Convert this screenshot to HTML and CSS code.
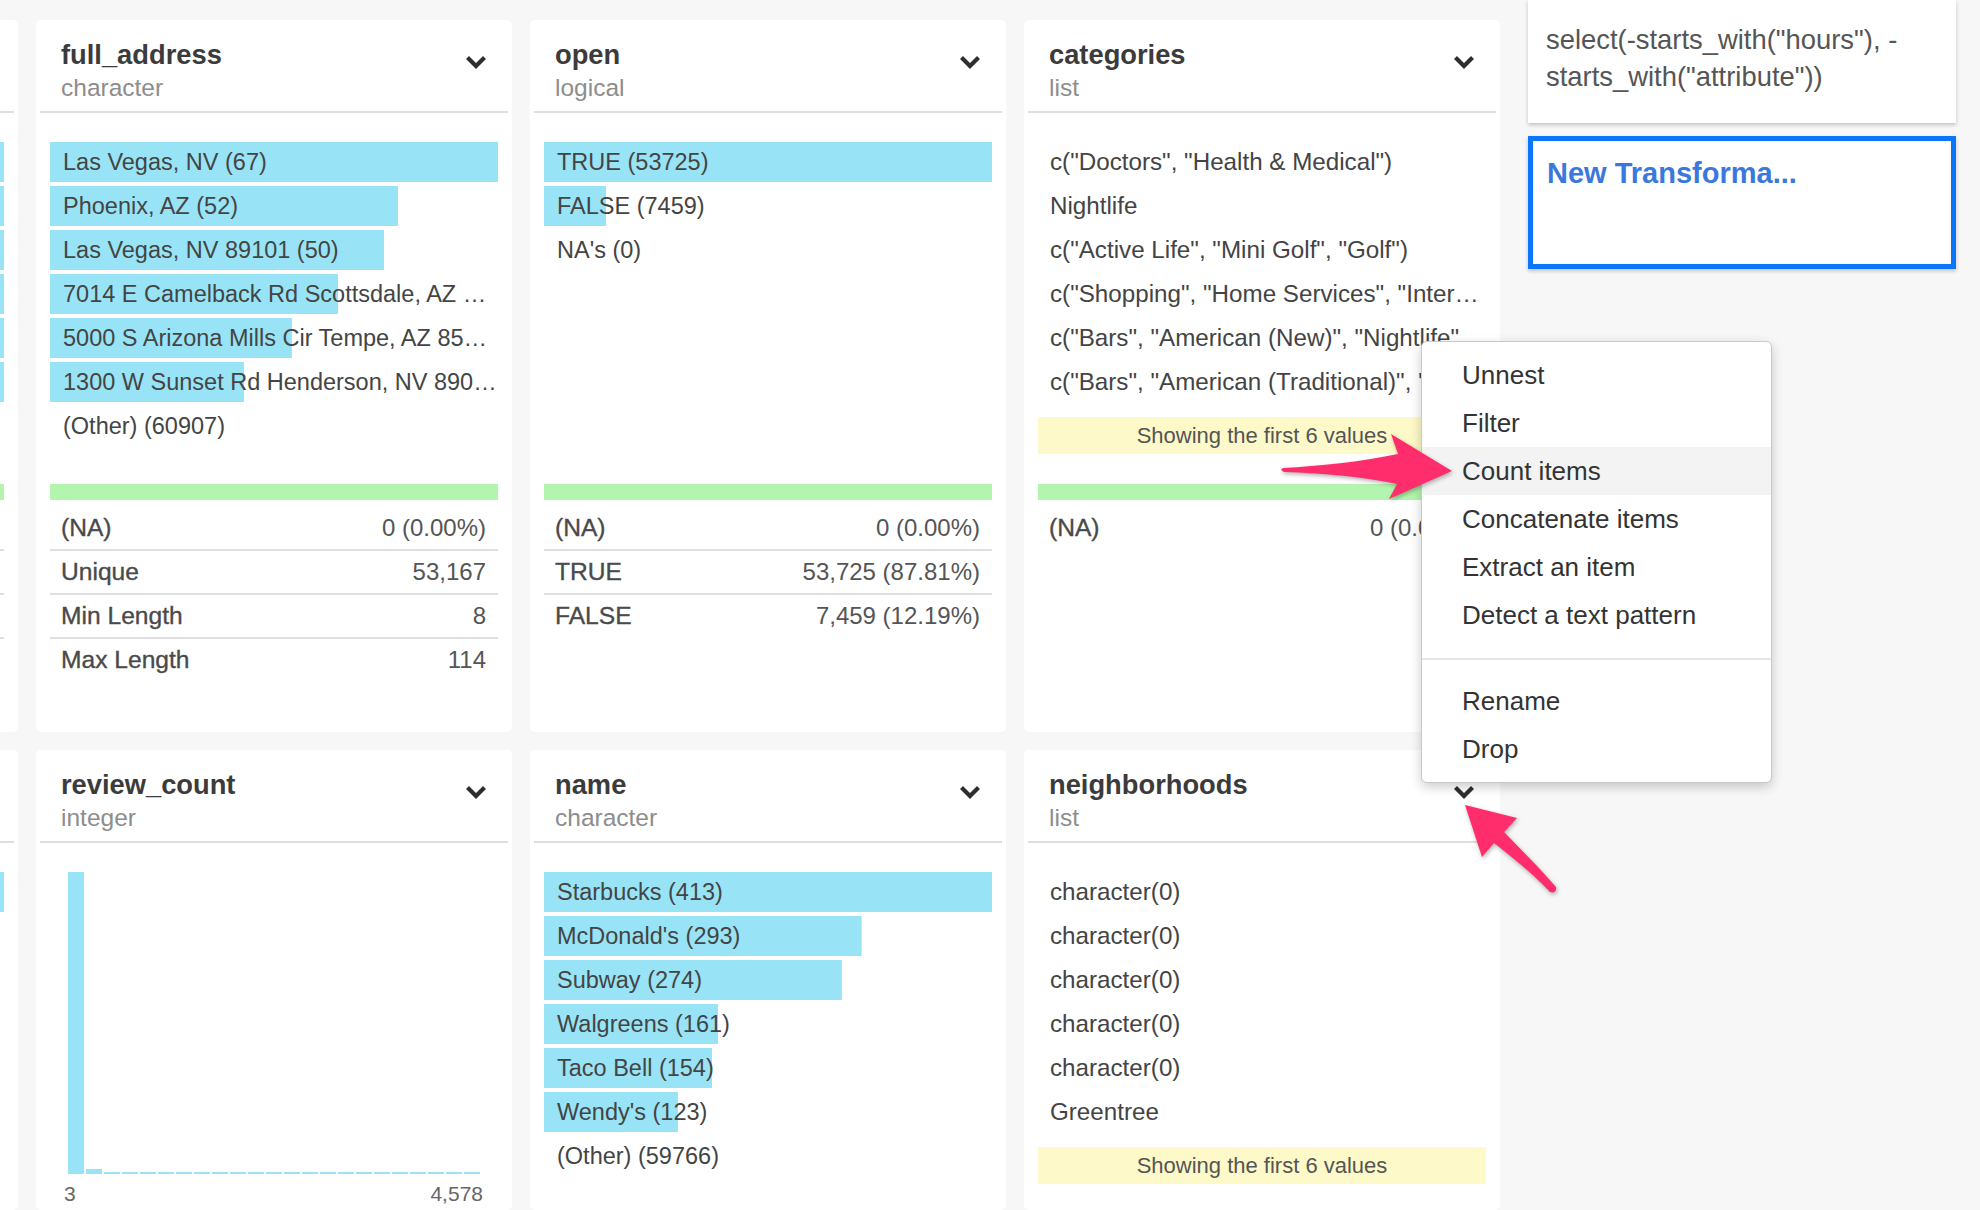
FILE: index.html
```html
<!DOCTYPE html>
<html lang="en">
<head>
<meta charset="utf-8">
<title>Columns summary</title>
<link rel="stylesheet" href="styles.css">
</head>
<body>
<div class="page">
  <div class="board">
    <!-- row 1: first column is scrolled out of view, only its right edge shows -->
    <section class="card card-clipped">
      <header class="card-head"></header>
      <div class="card-body">
        <div class="values">
          <div class="row bar" style="--w:100%"></div>
          <div class="row bar" style="--w:100%"></div>
          <div class="row bar" style="--w:100%"></div>
          <div class="row bar" style="--w:100%"></div>
          <div class="row bar" style="--w:100%"></div>
          <div class="row bar" style="--w:100%"></div>
        </div>
        <div class="valid"></div>
        <div class="stats">
          <div class="stat"></div>
          <div class="stat"></div>
          <div class="stat"></div>
          <div class="stat"></div>
        </div>
      </div>
    </section>

    <section class="card">
      <header class="card-head">
        <div class="col-name"><h2 class="col-title">full_address</h2><div class="col-type">character</div></div>
        <svg class="chev" viewBox="0 0 22 14"><path d="M2.5 2.5L11 11L19.5 2.5"/></svg>
      </header>
      <div class="card-body">
        <div class="values">
          <div class="row bar" style="--w:100%">Las Vegas, NV (67)</div>
          <div class="row bar" style="--w:77.7%">Phoenix, AZ (52)</div>
          <div class="row bar" style="--w:74.6%">Las Vegas, NV 89101 (50)</div>
          <div class="row bar" style="--w:64.3%">7014 E Camelback Rd Scottsdale, AZ …</div>
          <div class="row bar" style="--w:54%">5000 S Arizona Mills Cir Tempe, AZ 85…</div>
          <div class="row bar" style="--w:43.3%">1300 W Sunset Rd Henderson, NV 890…</div>
          <div class="row">(Other) (60907)</div>
        </div>
        <div class="valid"></div>
        <div class="stats">
          <div class="stat"><span class="lbl">(NA)</span><span>0 (0.00%)</span></div>
          <div class="stat"><span class="lbl">Unique</span><span>53,167</span></div>
          <div class="stat"><span class="lbl">Min Length</span><span>8</span></div>
          <div class="stat"><span class="lbl">Max Length</span><span>114</span></div>
        </div>
      </div>
    </section>

    <section class="card">
      <header class="card-head">
        <div class="col-name"><h2 class="col-title">open</h2><div class="col-type">logical</div></div>
        <svg class="chev" viewBox="0 0 22 14"><path d="M2.5 2.5L11 11L19.5 2.5"/></svg>
      </header>
      <div class="card-body">
        <div class="values">
          <div class="row bar" style="--w:100%">TRUE (53725)</div>
          <div class="row bar" style="--w:13.9%">FALSE (7459)</div>
          <div class="row">NA's (0)</div>
        </div>
        <div class="valid"></div>
        <div class="stats">
          <div class="stat"><span class="lbl">(NA)</span><span>0 (0.00%)</span></div>
          <div class="stat"><span class="lbl">TRUE</span><span>53,725 (87.81%)</span></div>
          <div class="stat"><span class="lbl">FALSE</span><span>7,459 (12.19%)</span></div>
        </div>
      </div>
    </section>

    <section class="card">
      <header class="card-head">
        <div class="col-name"><h2 class="col-title">categories</h2><div class="col-type">list</div></div>
        <svg class="chev" viewBox="0 0 22 14"><path d="M2.5 2.5L11 11L19.5 2.5"/></svg>
      </header>
      <div class="card-body">
        <div class="values">
          <div class="row plain">c("Doctors", "Health &amp; Medical")</div>
          <div class="row plain">Nightlife</div>
          <div class="row plain">c("Active Life", "Mini Golf", "Golf")</div>
          <div class="row plain">c("Shopping", "Home Services", "Inter…</div>
          <div class="row plain">c("Bars", "American (New)", "Nightlife"…</div>
          <div class="row plain">c("Bars", "American (Traditional)", "…</div>
          <div class="note">Showing the first 6 values</div>
        </div>
        <div class="valid"></div>
        <div class="stats">
          <div class="stat"><span class="lbl">(NA)</span><span>0 (0.00%)</span></div>
        </div>
      </div>
    </section>

    <!-- row 2 -->
    <section class="card card-clipped">
      <header class="card-head"></header>
      <div class="card-body">
        <div class="values">
          <div class="row bar" style="--w:100%"></div>
          <div class="row bar" style="--w:62%"></div>
          <div class="row bar" style="--w:41%"></div>
          <div class="row bar" style="--w:33%"></div>
          <div class="row bar" style="--w:27%"></div>
          <div class="row bar" style="--w:20%"></div>
        </div>
      </div>
    </section>

    <section class="card">
      <header class="card-head">
        <div class="col-name"><h2 class="col-title">review_count</h2><div class="col-type">integer</div></div>
        <svg class="chev" viewBox="0 0 22 14"><path d="M2.5 2.5L11 11L19.5 2.5"/></svg>
      </header>
      <div class="card-body">
        <div class="histo">
          <div class="hbar" style="height:302px"></div>
          <div class="hbar" style="height:5px"></div>
          <div class="hbar" style="height:2px"></div>
          <div class="hbar" style="height:2px"></div>
          <div class="hbar" style="height:2px"></div>
          <div class="hbar" style="height:2px"></div>
          <div class="hbar" style="height:2px"></div>
          <div class="hbar" style="height:2px"></div>
          <div class="hbar" style="height:2px"></div>
          <div class="hbar" style="height:2px"></div>
          <div class="hbar" style="height:2px"></div>
          <div class="hbar" style="height:2px"></div>
          <div class="hbar" style="height:2px"></div>
          <div class="hbar" style="height:2px"></div>
          <div class="hbar" style="height:2px"></div>
          <div class="hbar" style="height:2px"></div>
          <div class="hbar" style="height:2px"></div>
          <div class="hbar" style="height:2px"></div>
          <div class="hbar" style="height:2px"></div>
          <div class="hbar" style="height:2px"></div>
          <div class="hbar" style="height:2px"></div>
          <div class="hbar" style="height:2px"></div>
          <div class="hbar" style="height:2px"></div>
        </div>
        <div class="axis"><span>3</span><span>4,578</span></div>
      </div>
    </section>

    <section class="card">
      <header class="card-head">
        <div class="col-name"><h2 class="col-title">name</h2><div class="col-type">character</div></div>
        <svg class="chev" viewBox="0 0 22 14"><path d="M2.5 2.5L11 11L19.5 2.5"/></svg>
      </header>
      <div class="card-body">
        <div class="values">
          <div class="row bar" style="--w:100%">Starbucks (413)</div>
          <div class="row bar" style="--w:70.9%">McDonald's (293)</div>
          <div class="row bar" style="--w:66.5%">Subway (274)</div>
          <div class="row bar" style="--w:38.9%">Walgreens (161)</div>
          <div class="row bar" style="--w:37.5%">Taco Bell (154)</div>
          <div class="row bar" style="--w:29.9%">Wendy's (123)</div>
          <div class="row">(Other) (59766)</div>
        </div>
      </div>
    </section>

    <section class="card">
      <header class="card-head">
        <div class="col-name"><h2 class="col-title">neighborhoods</h2><div class="col-type">list</div></div>
        <svg class="chev" viewBox="0 0 22 14"><path d="M2.5 2.5L11 11L19.5 2.5"/></svg>
      </header>
      <div class="card-body">
        <div class="values">
          <div class="row plain">character(0)</div>
          <div class="row plain">character(0)</div>
          <div class="row plain">character(0)</div>
          <div class="row plain">character(0)</div>
          <div class="row plain">character(0)</div>
          <div class="row plain">Greentree</div>
          <div class="note">Showing the first 6 values</div>
        </div>
      </div>
    </section>
  </div>

  <aside class="steps">
    <div class="step step-code">select(-starts_with("hours"), -<br>starts_with("attribute"))</div>
    <div class="step step-new">New Transforma...</div>
  </aside>
</div>

<div class="menu">
  <div class="menu-item">Unnest</div>
  <div class="menu-item">Filter</div>
  <div class="menu-item active">Count items</div>
  <div class="menu-item">Concatenate items</div>
  <div class="menu-item">Extract an item</div>
  <div class="menu-item">Detect a text pattern</div>
  <div class="menu-sep"></div>
  <div class="menu-item">Rename</div>
  <div class="menu-item">Drop</div>
</div>

<svg class="overlay" viewBox="0 0 1980 1210" width="1980" height="1210">
  <path class="arrow" d="M1283 468 C1320 466 1360 462 1398 454 L1391 434 L1452 471 L1389 499 L1397 484 C1360 476 1320 473 1284 472 Q1279 470 1283 468 Z"/>
  <path class="arrow" d="M1465 805 L1517 818 L1504 832 C1522 851 1540 868 1556 887 Q1557 894 1550 892 C1533 874 1512 857 1494 843 L1482 857 Z"/>
</svg>
</body>
</html>
```

FILE: styles.css
```css
html, body {
  margin: 0;
  padding: 0;
}

body {
  width: 1980px;
  height: 1210px;
  overflow: hidden;
  position: relative;
  background: #f7f7f7;
  font-family: "Liberation Sans", Arial, Helvetica, sans-serif;
  color: #444;
}

.page {
  display: flex;
  align-items: flex-start;
  height: 1210px;
  overflow: hidden;
}

.board {
  flex: none;
  display: grid;
  grid-template-columns: repeat(4, 476px);
  grid-template-rows: 712px 460px;
  column-gap: 18px;
  row-gap: 18px;
  margin-left: -458px;
  padding-top: 20px;
}

.card {
  background: #fff;
  border-radius: 5px;
  padding: 0 4px;
  box-sizing: border-box;
  overflow: hidden;
}

.card-head {
  height: 93px;
  box-sizing: border-box;
  border-bottom: 2px solid #dedede;
  padding: 20px 21px 0;
  display: flex;
  justify-content: space-between;
  align-items: flex-start;
}

.col-title {
  margin: 0;
  font-size: 27.3px;
  line-height: 30px;
  font-weight: 700;
  color: #3b3b3b;
}

.col-type {
  margin-top: 1px;
  font-size: 24.5px;
  line-height: 34px;
  color: #8d8d8d;
}

.chev {
  flex: none;
  width: 22px;
  height: 14px;
  margin-top: 15px;
  fill: none;
  stroke: #2e2e2e;
  stroke-width: 4.2;
}

.card-body {
  padding: 29px 10px 0;
}

.values {
  height: 342px;
  display: flex;
  flex-direction: column;
  gap: 4px;
}

.row {
  flex: none;
  height: 40px;
  line-height: 40px;
  padding-left: 13px;
  font-size: 23.5px;
  white-space: nowrap;
  color: #444;
}

.row.plain {
  padding-left: 12px;
  font-size: 24.2px;
}

.bar {
  background-image: linear-gradient(#98e4f6, #98e4f6);
  background-repeat: no-repeat;
  background-size: var(--w) 100%;
}

.note {
  flex: none;
  margin-top: 11px;
  height: 37px;
  line-height: 37px;
  background: #fdf9c8;
  text-align: center;
  font-size: 22px;
  color: #555;
}

.valid {
  height: 16px;
  background: #b3f5ae;
}

.stats {
  margin-top: 7px;
}

.stat {
  display: flex;
  justify-content: space-between;
  height: 44px;
  box-sizing: border-box;
  line-height: 42px;
  padding: 0 12px 0 11px;
  border-bottom: 2px solid #e0e0e0;
  font-size: 24px;
  color: #555;
}

.stat:last-child {
  border-bottom: none;
}

.stat .lbl {
  color: #4a4a4a;
  font-size: 24.6px;
  -webkit-text-stroke: 0.35px #4a4a4a;
}

.histo {
  height: 302px;
  display: flex;
  align-items: flex-end;
  gap: 2px;
  padding-left: 18px;
}

.hbar {
  width: 16px;
  flex: none;
  background: #98e4f6;
}

.axis {
  display: flex;
  justify-content: space-between;
  padding: 8px 15px 0 14px;
  font-size: 21px;
  line-height: 24px;
  color: #666;
}

.steps {
  flex: none;
  width: 428px;
  margin-left: 28px;
  display: flex;
  flex-direction: column;
  gap: 13px;
}

.step {
  background: #fff;
  box-shadow: 0 2px 4px rgba(0, 0, 0, 0.22);
  box-sizing: border-box;
}

.step-code {
  height: 123px;
  padding: 21px 18px 0;
  font-size: 27.4px;
  line-height: 37px;
  color: #555;
}

.step-new {
  height: 133px;
  border: 5px solid #0a77fb;
  padding: 15px 14px 0;
  font-size: 29px;
  line-height: 34px;
  font-weight: 700;
  color: #3b78dd;
}

.menu {
  position: absolute;
  left: 1421px;
  top: 341px;
  width: 351px;
  box-sizing: border-box;
  padding: 9px 0;
  background: #fff;
  border: 1px solid #c9c9c9;
  border-radius: 6px;
  box-shadow: 0 4px 12px rgba(0, 0, 0, 0.2);
}

.menu-item {
  height: 48px;
  line-height: 48px;
  padding-left: 40px;
  font-size: 26px;
  color: #333;
}

.menu-item.active {
  background: #f3f3f3;
}

.menu-sep {
  height: 2px;
  background: #e6e6e6;
  margin: 19px 0 17px;
}

.overlay {
  position: absolute;
  left: 0;
  top: 0;
  pointer-events: none;
}

.arrow {
  fill: #ff2d6c;
  filter: drop-shadow(1px 2px 2px rgba(0, 0, 0, 0.3));
}
```
